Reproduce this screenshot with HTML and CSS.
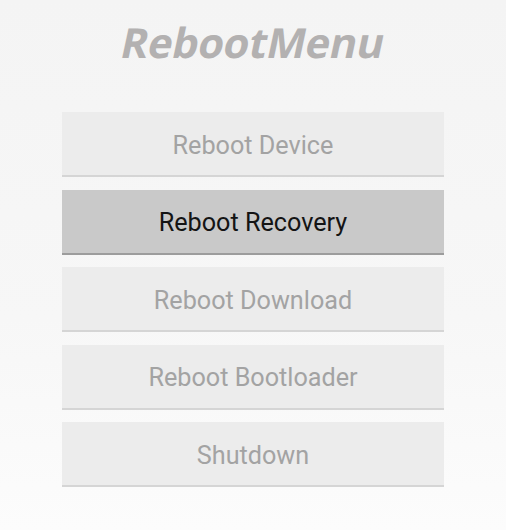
FILE: index.html
```html
<!DOCTYPE html>
<html lang="en">
<head>
    <meta charset="UTF-8">
    <meta name="viewport" content="width=device-width, initial-scale=1.0">
    <title>RebootMenu</title>
    <link rel="stylesheet" href="styles.css">
</head>
<body>
    <div class="screen">
        <h1 class="title">RebootMenu</h1>
        <div class="menu">
            <button class="menu-btn">Reboot Device</button>
            <button class="menu-btn pressed">Reboot Recovery</button>
            <button class="menu-btn">Reboot Download</button>
            <button class="menu-btn">Reboot Bootloader</button>
            <button class="menu-btn">Shutdown</button>
        </div>
    </div>
</body>
</html>
```

FILE: styles.css
```css
* {
    margin: 0;
    padding: 0;
    box-sizing: border-box;
}

html, body {
    height: 100%;
}

body {
    background: linear-gradient(#f4f4f4, #f7f7f7 60%, #fcfcfc);
    font-family: Roboto, 'Noto Sans', sans-serif;
}

.screen {
    width: 506px;
    height: 530px;
    display: flex;
    flex-direction: column;
    align-items: center;
}

/* droid-style slanted bold, not a true italic */
.title {
    font-family: 'Open Sans', 'DejaVu Sans', sans-serif;
    font-weight: 700;
    font-size: 41.5px;
    line-height: 84px;
    color: #b3b1b1;
    letter-spacing: -0.3px;
    transform: skewX(-12deg);
}

.menu {
    margin-top: 28px;
    width: 382px;
    display: flex;
    flex-direction: column;
    gap: 12.5px;
}

.menu-btn {
    height: 65px;
    border: none;
    border-bottom: 2px solid #d5d5d5;
    background: #ececec;
    color: #a3a3a3;
    font-family: Roboto, 'Noto Sans', sans-serif;
    font-size: 25.2px;
    padding-top: 3px;
    text-align: center;
}

.menu-btn.pressed {
    background: #c9c9c9;
    border-bottom-color: #9c9c9c;
    color: #141414;
}
```
